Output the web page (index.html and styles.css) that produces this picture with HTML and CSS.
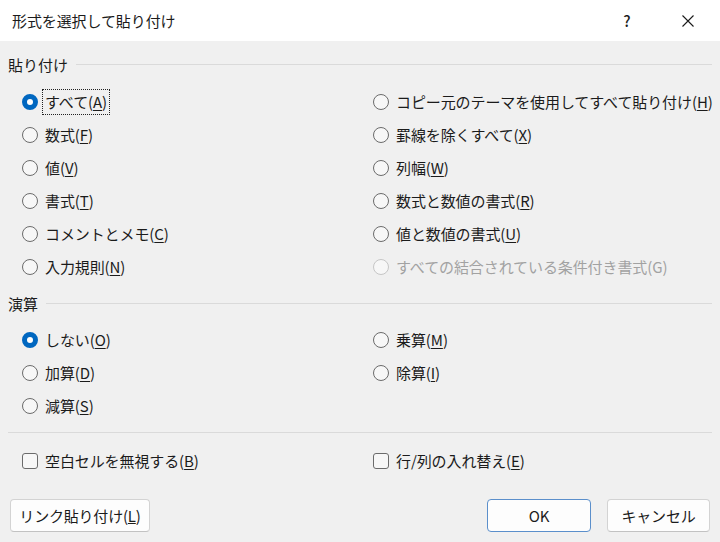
FILE: index.html
```html
<!DOCTYPE html>
<html lang="ja">
<head>
  <meta charset="UTF-8">
  <title>形式を選択して貼り付け</title>
  <link rel="stylesheet" href="styles.css">
</head>
<body>
  <div class="dialog">
    <!-- Title bar -->
    <div class="titlebar">
      <span class="title">形式を選択して貼り付け</span>
      <span class="help">?</span>
      <span class="close">
        <svg width="14" height="14" viewBox="0 0 14 14"><path d="M1.5 1.5 L12.5 12.5 M12.5 1.5 L1.5 12.5" stroke="#1a1a1a" stroke-width="1.1" fill="none"/></svg>
      </span>
    </div>

    <div class="content">
      <!-- 貼り付け -->
      <div class="group-head"><span>貼り付け</span><div class="rule"></div></div>
      <div class="options paste">
        <label class="opt"><span class="radio checked"></span><span class="focus">すべて(<u>A</u>)</span></label>
        <label class="opt"><span class="radio"></span>コピー元のテーマを使用してすべて貼り付け(<u>H</u>)</label>
        <label class="opt"><span class="radio"></span>数式(<u>F</u>)</label>
        <label class="opt"><span class="radio"></span>罫線を除くすべて(<u>X</u>)</label>
        <label class="opt"><span class="radio"></span>値(<u>V</u>)</label>
        <label class="opt"><span class="radio"></span>列幅(<u>W</u>)</label>
        <label class="opt"><span class="radio"></span>書式(<u>T</u>)</label>
        <label class="opt"><span class="radio"></span>数式と数値の書式(<u>R</u>)</label>
        <label class="opt"><span class="radio"></span>コメントとメモ(<u>C</u>)</label>
        <label class="opt"><span class="radio"></span>値と数値の書式(<u>U</u>)</label>
        <label class="opt"><span class="radio"></span>入力規則(<u>N</u>)</label>
        <label class="opt disabled"><span class="radio"></span>すべての結合されている条件付き書式(G)</label>
      </div>

      <!-- 演算 -->
      <div class="group-head calc-head"><span>演算</span><div class="rule"></div></div>
      <div class="options calc">
        <label class="opt"><span class="radio checked"></span>しない(<u>O</u>)</label>
        <label class="opt"><span class="radio"></span>乗算(<u>M</u>)</label>
        <label class="opt"><span class="radio"></span>加算(<u>D</u>)</label>
        <label class="opt"><span class="radio"></span>除算(<u>I</u>)</label>
        <label class="opt"><span class="radio"></span>減算(<u>S</u>)</label>
      </div>

      <div class="separator"></div>

      <div class="options checks">
        <label class="opt"><span class="check"></span>空白セルを無視する(<u>B</u>)</label>
        <label class="opt"><span class="check"></span>行/列の入れ替え(<u>E</u>)</label>
      </div>

      <div class="buttons">
        <button class="btn link-btn">リンク貼り付け(<u>L</u>)</button>
        <div class="spacer"></div>
        <button class="btn ok">OK</button>
        <button class="btn cancel">キャンセル</button>
      </div>
    </div>
  </div>
</body>
</html>
```

FILE: styles.css
```css
body {
  margin: 0;
  padding: 0;
  font-family: "Noto Sans CJK JP", "Noto Sans", sans-serif;
  font-size: 15px;
  color: #1b1b1b;
  background: #f0f0f0;
}

.dialog {
  width: 720px;
  height: 542px;
  background: #f0f0f0;
  overflow: hidden;
}

.titlebar {
  height: 41px;
  background: #ffffff;
  display: flex;
  align-items: center;
  padding: 0 0 0 12px;
}

.title {
  flex: 1;
  font-size: 15px;
  letter-spacing: -0.1px;
}

.help {
  width: 20px;
  text-align: center;
  font-size: 15px;
  font-weight: 500;
  margin-right: 44px;
}

.close {
  width: 14px;
  height: 14px;
  margin-right: 25px;
  display: flex;
}

.content {
  padding: 0 8px;
}

.group-head {
  display: flex;
  align-items: center;
  height: 24px;
  margin-top: 11px;
  gap: 8px;
}

.rule {
  flex: 1;
  height: 1px;
  background: #dadada;
}

.calc-head {
  margin-top: 8px;
}

.options {
  display: grid;
  grid-template-columns: 351px 1fr;
  padding-left: 14px;
}

.paste {
  margin-top: 9px;
}

.calc {
  margin-top: 8px;
}

.opt {
  height: 33px;
  display: flex;
  align-items: center;
  letter-spacing: -0.1px;
  white-space: nowrap;
}

.opt u {
  text-underline-offset: 2px;
}

.radio {
  width: 16px;
  height: 16px;
  border: 1px solid #6b6b6b;
  border-radius: 50%;
  box-sizing: border-box;
  margin-right: 7px;
  flex-shrink: 0;
  background: #f7f7f7;
}

.radio.checked {
  border: 5px solid #0067c0;
  background: #ffffff;
}

.disabled {
  color: #a2a2a2;
}

.disabled .radio {
  border-color: #c6c6c6;
}

.focus {
  outline: 1px dotted #222;
  outline-offset: 1px;
  padding: 0 1px;
  margin-left: -1px;
  line-height: 22px;
}

.separator {
  height: 1px;
  background: #dadada;
  margin-top: 10px;
}

.checks {
  margin-top: 11px;
}

.check {
  width: 16px;
  height: 16px;
  border: 1px solid #6b6b6b;
  border-radius: 3px;
  box-sizing: border-box;
  margin-right: 7px;
  background: #f7f7f7;
  flex-shrink: 0;
}

.buttons {
  display: flex;
  margin-top: 22px;
  padding: 0 2px;
  gap: 16px;
}

.spacer {
  flex: 1;
}

.btn {
  height: 33px;
  font-family: inherit;
  font-size: 15px;
  color: #1b1b1b;
  background: #fdfdfd;
  border: 1px solid #d3d3d3;
  border-bottom-color: #c2c2c2;
  border-radius: 4px;
  letter-spacing: -0.2px;
  padding: 0;
}

.link-btn {
  width: 140px;
}

.ok {
  width: 104px;
  border: 1px solid #5b8fcb;
}

.cancel {
  width: 103px;
}
```
